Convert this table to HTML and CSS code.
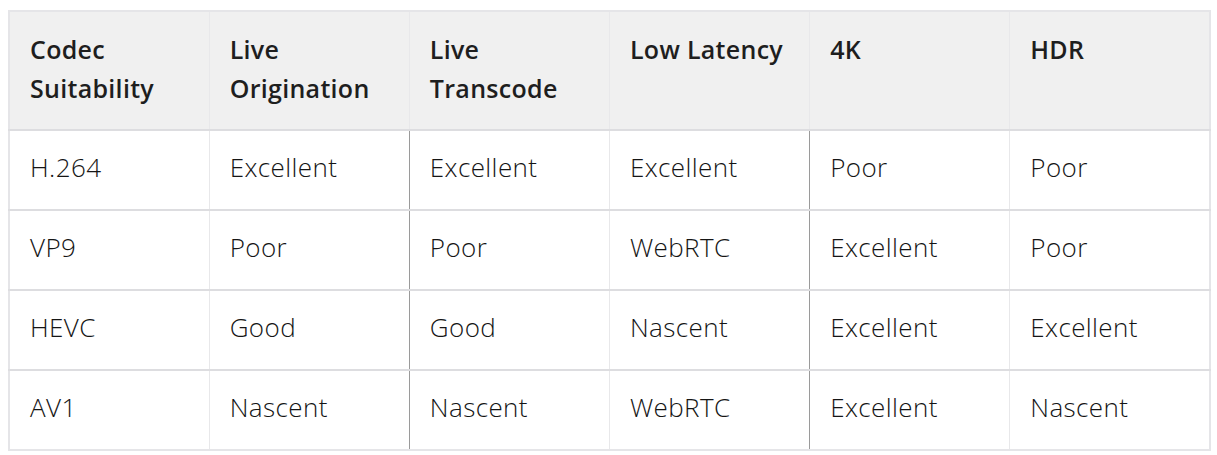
FILE: index.html
```html
<!DOCTYPE html>
<html lang="en">
<head>
<meta charset="utf-8">
<title>Codec Suitability</title>
<link rel="stylesheet" href="styles.css">
</head>
<body>
<table class="codec-table">
  <thead>
    <tr>
      <th>Codec Suitability</th>
      <th>Live Origination</th>
      <th>Live Transcode</th>
      <th>Low Latency</th>
      <th>4K</th>
      <th>HDR</th>
    </tr>
  </thead>
  <tbody>
    <tr>
      <td>H.264</td>
      <td>Excellent</td>
      <td class="dark">Excellent</td>
      <td>Excellent</td>
      <td class="dark">Poor</td>
      <td>Poor</td>
    </tr>
    <tr>
      <td>VP9</td>
      <td>Poor</td>
      <td class="dark">Poor</td>
      <td>WebRTC</td>
      <td class="dark">Excellent</td>
      <td>Poor</td>
    </tr>
    <tr>
      <td>HEVC</td>
      <td>Good</td>
      <td class="dark">Good</td>
      <td>Nascent</td>
      <td class="dark">Excellent</td>
      <td>Excellent</td>
    </tr>
    <tr>
      <td>AV1</td>
      <td>Nascent</td>
      <td class="dark">Nascent</td>
      <td>WebRTC</td>
      <td class="dark">Excellent</td>
      <td>Nascent</td>
    </tr>
  </tbody>
</table>
</body>
</html>
```

FILE: styles.css
```css
html, body {
  background: #ffffff;
}
body {
  margin: 10px 6px 8px 8px;
  font-family: "Open Sans", Lato, sans-serif;
  color: #222222;
}
.codec-table {
  width: 1203px;
  border-collapse: collapse;
  table-layout: fixed;
  border: 2px solid #e5e5e8;
}
.codec-table th,
.codec-table td {
  text-align: left;
  vertical-align: top;
  line-height: 39px;
  padding: 18px 20px 21px;
  border-left: 1px solid #e8e8ea;
}
.codec-table th {
  background: #f0f0f0;
  font-size: 25px;
  font-weight: 600;
  letter-spacing: 0.3px;
  color: #1e1e1e;
  border-bottom: 2px solid #dddde0;
}
.codec-table td {
  font-size: 26px;
  font-weight: 300;
  letter-spacing: 0.4px;
  color: #151515;
  border-top: 2px solid #dddde0;
  padding-top: 17px;
  padding-bottom: 22px;
}
.codec-table td.dark {
  border-left: 1px solid #9a9a9a;
}
```
